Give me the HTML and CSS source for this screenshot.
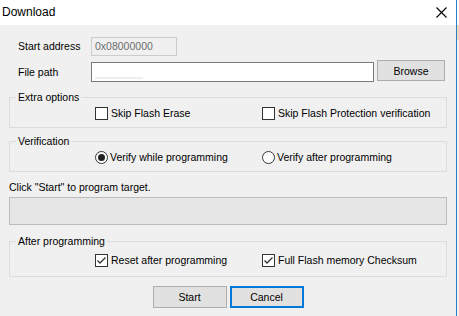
FILE: index.html
```html
<!DOCTYPE html>
<html>
  <head>
    <title>Download</title>
    <link rel="stylesheet" href="styles.css">
  </head>
  <body>
    <div class="screen">
      <div class="dialog">
        <div class="titlebar">
          <span class="title">Download</span>
          <svg class="close" width="11" height="11" viewBox="0 0 11 11">
            <path d="M0.5 0.5 L10.5 10.5 M10.5 0.5 L0.5 10.5" stroke="#000" stroke-width="1.1" fill="none" />
          </svg>
        </div>

        <div class="content">
          <div class="row row-address">
            <span class="label">Start address</span>
            <div class="field field-disabled">0x08000000</div>
          </div>
          <div class="row row-path">
            <span class="label">File path</span>
            <div class="field field-path"><span class="caret-mark"></span></div>
            <button class="btn btn-browse">Browse</button>
          </div>

          <fieldset class="group">
            <legend>Extra options</legend>
            <div class="opts">
              <label class="opt"><span class="box"></span>Skip Flash Erase</label>
              <label class="opt"><span class="box"></span>Skip Flash Protection verification</label>
            </div>
          </fieldset>

          <fieldset class="group group-verify">
            <legend>Verification</legend>
            <div class="opts">
              <label class="opt"><span class="radio on"></span>Verify while programming</label>
              <label class="opt"><span class="radio"></span>Verify after programming</label>
            </div>
          </fieldset>

          <p class="hint">Click "Start" to program target.</p>
          <div class="progress"></div>

          <fieldset class="group group-after">
            <legend>After programming</legend>
            <div class="opts opts-tall">
              <label class="opt">
                <span class="box">
                  <svg width="11" height="11" viewBox="0 0 11 11"><path d="M1.5 5.5 L4 8 L9.5 2.5" stroke="#333" stroke-width="1.3" fill="none" /></svg>
                </span>Reset after programming
              </label>
              <label class="opt">
                <span class="box">
                  <svg width="11" height="11" viewBox="0 0 11 11"><path d="M1.5 5.5 L4 8 L9.5 2.5" stroke="#333" stroke-width="1.3" fill="none" /></svg>
                </span>Full Flash memory Checksum
              </label>
            </div>
          </fieldset>

          <div class="actions">
            <button class="btn">Start</button>
            <button class="btn btn-default">Cancel</button>
          </div>
        </div>
      </div>
      <div class="edge"></div>
    </div>
  </body>
</html>
```

FILE: styles.css
```css
body {
  margin: 0;
  font-family: "Liberation Sans", Arial, sans-serif;
  font-size: 10.5px;
  color: #000;
  background: #f0f0f0;
}
.screen {
  display: flex;
  width: 459px;
  height: 316px;
  overflow: hidden;
}
.dialog {
  width: 456px;
  display: flex;
  flex-direction: column;
  background: #f0f0f0;
}
.edge {
  flex: 1;
  border-left: 1px solid #2e7bc6;
  background: linear-gradient(#ffffff 0, #ffffff 25px, #e9dcc0 25px, #e9dcc0 40px, #f3f3f3 40px);
}
.titlebar {
  height: 25px;
  background: #fff;
  display: flex;
  align-items: center;
  justify-content: space-between;
  padding: 0 9px 0 2px;
}
.title {
  font-size: 12px;
  padding-bottom: 1px;
}
.close {
  margin-top: -1px;
}
.content {
  flex: 1;
  display: flex;
  flex-direction: column;
}
.row {
  display: flex;
  align-items: flex-start;
  padding-left: 18px;
}
.label {
  width: 73px;
}
.row-address {
  margin-top: 12px;
  height: 19px;
}
.row-address .label {
  line-height: 19px;
}
.row-path {
  margin-top: 4px;
  height: 21px;
}
.row-path .label {
  line-height: 20px;
  margin-top: 2px;
}
.field {
  box-sizing: border-box;
  border: 1px solid #7a7a7a;
  background: #fff;
}
.field-disabled {
  width: 86px;
  height: 19px;
  line-height: 17px;
  padding-left: 3px;
  border-color: #cccccc;
  background: #f0f0f0;
  color: #6d6d6d;
}
.field-path {
  width: 283px;
  height: 20px;
  margin-top: 2px;
  position: relative;
}
.caret-mark {
  position: absolute;
  left: 3px;
  top: 14px;
  width: 48px;
  height: 2px;
  background: #eeeeee;
}
.btn {
  box-sizing: border-box;
  font-family: "Liberation Sans", Arial, sans-serif;
  font-size: 10.5px;
  color: #000;
  background: #e1e1e1;
  border: 1px solid #adadad;
  border-radius: 0;
  padding: 0;
  width: 74px;
  height: 22px;
}
.btn-browse {
  width: 68px;
  height: 21px;
  margin-left: 3px;
}
.btn-default {
  border: 2px solid #0078d7;
}
.group {
  margin: 0 9px 0 9px;
  padding: 0;
  border: 1px solid #dcdcdc;
  min-width: 0;
}
.group legend {
  margin-left: 6px;
  padding: 0 2px;
  line-height: 12px;
  font-size: 10.5px;
}
.group:first-of-type {
  margin-top: 10px;
}
.group-verify {
  margin-top: 7px;
}
.opts {
  display: grid;
  grid-template-columns: 167px auto;
  align-items: center;
  height: 20px;
  padding: 0 0 4px 85px;
}
.opts-tall {
  height: 26px;
  padding-bottom: 3px;
}
.opt {
  display: flex;
  align-items: center;
  white-space: nowrap;
}
.box {
  box-sizing: border-box;
  width: 13px;
  height: 13px;
  border: 1px solid #333;
  background: #fff;
  margin-right: 3px;
  display: flex;
  align-items: center;
  justify-content: center;
}
.radio {
  box-sizing: border-box;
  width: 13px;
  height: 13px;
  border: 1px solid #333;
  border-radius: 50%;
  background: #fff;
  margin-right: 2px;
  display: flex;
  align-items: center;
  justify-content: center;
}
.radio.on::after {
  content: "";
  width: 7px;
  height: 7px;
  border-radius: 50%;
  background: #222;
}
.hint {
  margin: 8px 0 0 9px;
  line-height: 14px;
}
.progress {
  box-sizing: border-box;
  margin: 3px 9px 0 9px;
  height: 28px;
  border: 1px solid #bcbcbc;
  background: #e6e6e6;
}
.group-after {
  margin-top: 10px;
}
.actions {
  display: flex;
  justify-content: center;
  gap: 3px;
  margin-top: 9px;
}
```
